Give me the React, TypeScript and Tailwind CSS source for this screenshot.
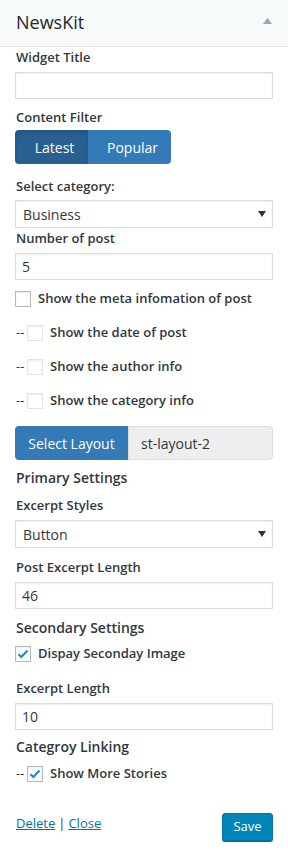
import React from "react";

const font = { fontFamily: '"Open Sans", "Noto Sans", sans-serif' };

function Label({ children, cls = "" }: { children: React.ReactNode; cls?: string }) {
  return <div className={`text-[13px] leading-[18px] font-semibold text-[#32373c] ${cls}`}>{children}</div>;
}
function Heading({ children, cls = "" }: { children: React.ReactNode; cls?: string }) {
  return <div className={`text-[14px] leading-[18px] font-semibold text-[#32373c] ${cls}`}>{children}</div>;
}
function Input({ value = "", cls = "" }: { value?: string; cls?: string }) {
  return (
    <div className={`h-[27px] border border-[#ddd] shadow-[inset_0_1px_2px_rgba(0,0,0,0.07)] bg-white flex items-center px-[6px] text-[14px] text-[#32373c] ${cls}`}>
      {value}
    </div>
  );
}
function Select({ value, cls = "" }: { value: string; cls?: string }) {
  return (
    <div className={`h-[28px] border border-[#ddd] shadow-[inset_0_1px_2px_rgba(0,0,0,0.07)] bg-white flex items-center justify-between pl-[7px] pr-[6px] text-[14px] text-[#32373c] ${cls}`}>
      <span>{value}</span>
      <svg width="8" height="6" viewBox="0 0 8 6"><path d="M0 0h8L4 6z" fill="#333" /></svg>
    </div>
  );
}
function Check({ checked = false, light = false }: { checked?: boolean; light?: boolean }) {
  return (
    <div className={`w-[16px] h-[16px] border ${light ? "border-[#e2e4e6]" : "border-[#b4b9be]"} bg-white shadow-[inset_0_1px_2px_rgba(0,0,0,0.08)] flex items-center justify-center`}>
      {checked && (
        <svg width="12" height="10" viewBox="0 0 12 10"><path d="M1.5 5.2 4.4 8 10.5 1.6" fill="none" stroke="#1e8cbe" strokeWidth="2.2" /></svg>
      )}
    </div>
  );
}

export default function App() {
  return (
    <div className="w-[288px] h-[854px] bg-white" style={font}>
      <div className="h-[47px] bg-[#f7fafa] border-b border-[#e5e5e5] flex items-center justify-between pl-[16px] pr-[16px]">
        <span className="text-[18px] text-[#23282d] leading-none pb-[2px]">NewsKit</span>
        <svg width="9" height="6" viewBox="0 0 9 6" className="mb-[5px]"><path d="M0 6h9L4.5 0z" fill="#a0a5aa" /></svg>
      </div>
      <div className="px-[15px]">
        <Label cls="mt-[1px] pl-[1px]">Widget Title</Label>
        <Input cls="mt-[6px]" />
        <Label cls="mt-[9px] pl-[1px]">Content Filter</Label>
        <div className="mt-[4px] flex h-[34px] w-[156px] rounded-[4px] overflow-hidden text-[14px] text-white">
          <div className="w-[73px] bg-[#286090] flex items-center justify-center pl-[6px] shadow-[inset_0_3px_5px_rgba(0,0,0,0.125)]">Latest</div>
          <div className="flex-1 bg-[#337ab7] flex items-center justify-center pl-[6px]">Popular</div>
        </div>
        <Label cls="mt-[13px] pl-[1px]">Select category:</Label>
        <Select value="Business" cls="mt-[5px]" />
        <Label cls="mt-[1px] pl-[1px]">Number of post</Label>
        <Input value="5" cls="mt-[6px]" />
        <div className="mt-[10px] flex items-center h-[18px]">
          <Check />
          <span className="ml-[7px] text-[13px] font-semibold text-[#32373c]">Show the meta infomation of post</span>
        </div>
        {["Show the date of post", "Show the author info", "Show the category info"].map((t) => (
          <div key={t} className="mt-[16px] flex items-center h-[18px]">
            <span className="text-[13px] text-[#32373c] pl-[1px] w-[12px]">--</span>
            <Check light />
            <span className="ml-[7px] text-[13px] font-semibold text-[#32373c]">{t}</span>
          </div>
        ))}
        <div className="mt-[16px] flex h-[34px] text-[14px]">
          <div className="w-[113px] bg-[#337ab7] text-white flex items-center justify-center rounded-l-[4px]">Select Layout</div>
          <div className="flex-1 bg-[#eee] border border-[#ddd] rounded-r-[4px] flex items-center pl-[12px] text-[#32373c]">st-layout-2</div>
        </div>
        <Heading cls="mt-[9px] pl-[1px]">Primary Settings</Heading>
        <Label cls="mt-[9px] pl-[1px]">Excerpt Styles</Label>
        <Select value="Button" cls="mt-[6px]" />
        <Label cls="mt-[10px] pl-[1px]">Post Excerpt Length</Label>
        <Input value="46" cls="mt-[6px]" />
        <Heading cls="mt-[10px] pl-[1px]">Secondary Settings</Heading>
        <div className="mt-[8px] flex items-center h-[18px]">
          <Check checked />
          <span className="ml-[7px] text-[13px] font-semibold text-[#32373c]">Dispay Seconday Image</span>
        </div>
        <Label cls="mt-[16px] pl-[1px]">Excerpt Length</Label>
        <Input value="10" cls="mt-[6px]" />
        <Heading cls="mt-[8px] pl-[1px]">Categroy Linking</Heading>
        <div className="mt-[9px] flex items-center h-[18px]">
          <span className="text-[13px] text-[#32373c] pl-[1px] w-[12px]">--</span>
          <Check checked />
          <span className="ml-[7px] text-[13px] font-semibold text-[#32373c]">Show More Stories</span>
        </div>
        <div className="mt-[30px] flex items-start justify-between">
          <div className="text-[13px] text-[#32373c] pl-[1px] pt-[1px]">
            <span className="text-[#0073aa] underline">Delete</span>
            <span className="mx-[3px]">|</span>
            <span className="text-[#0073aa] underline">Close</span>
          </div>
          <div className="h-[28px] w-[51px] bg-[#0085ba] border border-[#0073aa] rounded-[3px] shadow-[0_1px_0_#006799] text-white text-[13px] flex items-center justify-center">Save</div>
        </div>
      </div>
    </div>
  );
}
